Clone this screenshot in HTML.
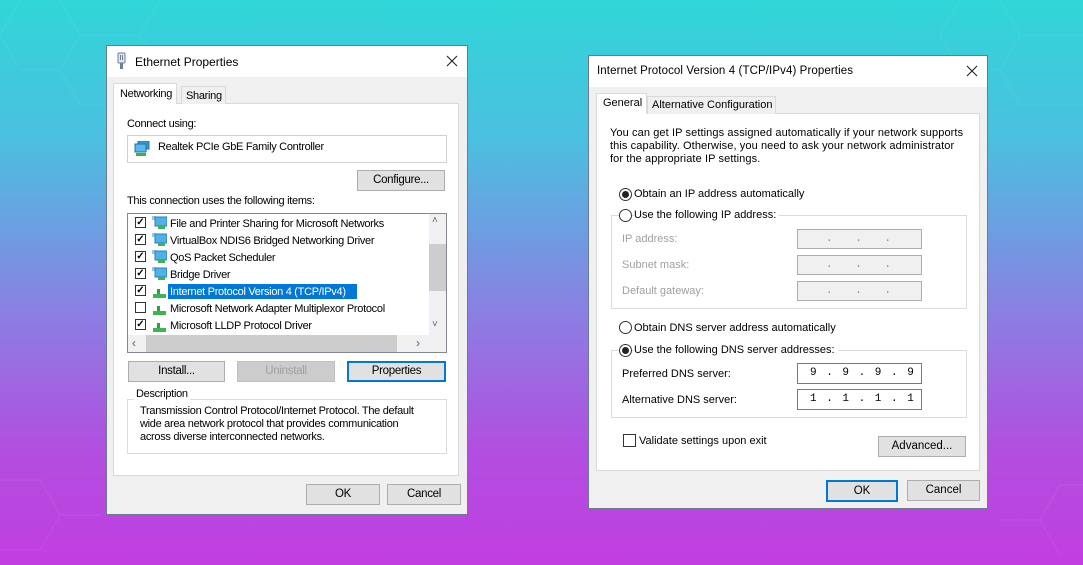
<!DOCTYPE html>
<html><head><meta charset="utf-8"><style>
*{margin:0;padding:0;box-sizing:border-box}
body{width:1083px;height:565px;overflow:hidden;position:relative;font-family:"Liberation Sans",Arial,sans-serif;font-size:11px;letter-spacing:-0.3px;color:#000;
background:linear-gradient(180deg,#30d6d8 0%,#4cbfe0 25%,#8a80e2 55%,#b24ee0 80%,#c23ee0 100%);}
.a{position:absolute}
.dlg{position:absolute;background:#f0f0f0;border:1px solid #6a7a8a}
.tb{position:absolute;left:0;top:0;right:0;background:#fff}
.pan{position:absolute;background:#fff;border:1px solid #d9d9d9}
.btn{position:absolute;background:#e1e1e1;border:1px solid #adadad;text-align:center;font-size:11.5px}
.btn.def{border:2px solid #0078d7}
.t{position:absolute;white-space:nowrap}
.d2 .t,.d2 .btn{letter-spacing:0}
.cb{position:absolute;width:11px;height:11px;border:1px solid #333;background:#fff;font-size:10px;line-height:9px;text-align:center;font-weight:bold;letter-spacing:0}
.ic{position:absolute;width:15px;height:13px}
.rd{position:absolute;width:13px;height:13px;border:1px solid #333;border-radius:50%;background:#fff}
.rd.on::after{content:"";position:absolute;left:2px;top:2px;width:7px;height:7px;border-radius:50%;background:#222}
.grp{position:absolute;border:1px solid #dcdcdc}
.ip{position:absolute;background:#f0f0f0;border:1px solid #adadad;font-family:"Liberation Mono",monospace;font-size:11px;color:#888;letter-spacing:0}
.ip.en{background:#fff;border-color:#7a7a7a;color:#000;word-spacing:3px}
.gray{color:#a0a0a0}
</style></head><body>

<svg class="a" style="left:0;top:0" width="1083" height="565">
<g fill="none" stroke="rgba(255,255,255,0.05)" stroke-width="1.5">
<path d="M0 35 L20 0 M60 0 L80 35 L60 70 L20 70 L0 35 M80 35 L140 35 L160 0 M140 35 L160 70 L140 105 L80 105 L60 70 M160 70 L220 70 M1000 0 L1020 35 L1000 70 L960 70 L940 35 L960 0 M1020 35 L1083 35 M1000 70 L1020 105 L1083 105"/>
<path d="M0 480 L40 480 L60 515 L40 550 L0 550 M60 515 L100 515 M1000 520 L1040 520 L1060 555 M1040 520 L1060 485 L1083 485"/>
</g></svg>

<!-- Dialog 1 -->
<div class="dlg" style="left:106px;top:45px;width:362px;height:470px">
  <div class="tb" style="height:31px"></div>
</div>
<svg class="a" style="left:116px;top:52px" width="12" height="18"><rect x="2" y="1" width="7" height="10" rx="1" fill="#dfe6ee" stroke="#6a7f99"/><rect x="4" y="3" width="1" height="5" fill="#6a7f99"/><rect x="6" y="3" width="1" height="5" fill="#6a7f99"/><rect x="4" y="11" width="3" height="6" fill="#6a7f99"/></svg>
<div class="t" style="left:135px;top:55px;font-size:12px;letter-spacing:0">Ethernet Properties</div>
<svg class="a" style="left:446px;top:55px" width="12" height="12"><path d="M1 1L11 11M11 1L1 11" stroke="#222" stroke-width="1.1"/></svg>

<div class="pan" style="left:113px;top:103px;width:346px;height:373px"></div>
<div class="a" style="left:113px;top:83px;width:64px;height:21px;background:#fff;border:1px solid #d9d9d9;border-bottom:none"></div>
<div class="t" style="left:120px;top:88px">Networking</div>
<div class="a" style="left:181px;top:86px;width:45px;height:18px;background:#f0f0f0;border:1px solid #d9d9d9;border-bottom:none"></div>
<div class="t" style="left:186px;top:90px">Sharing</div>

<div class="t" style="left:127px;top:118px">Connect using:</div>
<div class="a" style="left:127px;top:135px;width:320px;height:28px;border:1px solid #d0d0d0;background:#fff"></div>
<svg class="a" style="left:134px;top:141px" width="16" height="16"><rect x="4" y="0" width="11" height="8" fill="#3a9ad9" stroke="#1d6fa8"/><rect x="1" y="3" width="11" height="8" fill="#5bb8ea" stroke="#1d6fa8"/><rect x="2" y="12" width="10" height="3" fill="#39b24a"/></svg>
<div class="t" style="left:158px;top:141px">Realtek PCIe GbE Family Controller</div>

<div class="btn" style="left:357px;top:170px;width:88px;height:21px;line-height:19px">Configure...</div>
<div class="t" style="left:127px;top:195px">This connection uses the following items:</div>

<div class="a" style="left:127px;top:213px;width:320px;height:140px;border:1px solid #828790;background:#fff"></div>
<div class="a" style="left:429px;top:214px;width:17px;height:121px;background:#f0f0f0"></div>
<div class="a" style="left:429px;top:244px;width:17px;height:47px;background:#cdcdcd"></div>
<div class="t" style="left:432px;top:215px;font-size:10px;color:#606060">˄</div>
<div class="t" style="left:432px;top:319px;font-size:10px;color:#606060">˅</div>
<div class="a" style="left:128px;top:335px;width:318px;height:17px;background:#f0f0f0"></div>
<div class="a" style="left:146px;top:335px;width:251px;height:17px;background:#cdcdcd"></div>
<div class="t" style="left:132px;top:336px;font-size:12px;color:#606060">‹</div>
<div class="t" style="left:416px;top:336px;font-size:12px;color:#606060">›</div>

<div class="a" style="left:168px;top:284px;width:189px;height:15px;background:#0078d7"></div>

<div class="cb" style="left:135px;top:217px">✓</div><svg class="ic" style="left:152px;top:216px"><rect x="0" y="0" width="4" height="4" fill="#8fcbe9"/><rect x="3" y="1" width="12" height="9" fill="#4fb1e6" stroke="#2a80b9"/><rect x="6" y="10" width="7" height="3" fill="#3fb34f"/></svg>
<div class="t" style="left:170px;top:218px">File and Printer Sharing for Microsoft Networks</div>
<div class="cb" style="left:135px;top:234px">✓</div><svg class="ic" style="left:152px;top:233px"><rect x="0" y="0" width="4" height="4" fill="#8fcbe9"/><rect x="3" y="1" width="12" height="9" fill="#4fb1e6" stroke="#2a80b9"/><rect x="6" y="10" width="7" height="3" fill="#3fb34f"/></svg>
<div class="t" style="left:170px;top:235px">VirtualBox NDIS6 Bridged Networking Driver</div>
<div class="cb" style="left:135px;top:251px">✓</div><svg class="ic" style="left:152px;top:250px"><rect x="0" y="0" width="4" height="4" fill="#8fcbe9"/><rect x="3" y="1" width="12" height="9" fill="#4fb1e6" stroke="#2a80b9"/><rect x="6" y="10" width="7" height="3" fill="#3fb34f"/></svg>
<div class="t" style="left:170px;top:252px">QoS Packet Scheduler</div>
<div class="cb" style="left:135px;top:268px">✓</div><svg class="ic" style="left:152px;top:267px"><rect x="0" y="0" width="4" height="4" fill="#8fcbe9"/><rect x="3" y="1" width="12" height="9" fill="#4fb1e6" stroke="#2a80b9"/><rect x="6" y="10" width="7" height="3" fill="#3fb34f"/></svg>
<div class="t" style="left:170px;top:269px">Bridge Driver</div>
<div class="cb" style="left:135px;top:285px">✓</div><svg class="ic" style="left:152px;top:286px"><rect x="5" y="3" width="3" height="6" fill="#2aa24a"/><rect x="1" y="8" width="13" height="4" fill="#3fb34f"/></svg>
<div class="t" style="left:170px;top:286px;color:#fff">Internet Protocol Version 4 (TCP/IPv4)</div>
<div class="cb" style="left:135px;top:302px"></div><svg class="ic" style="left:152px;top:303px"><rect x="5" y="3" width="3" height="6" fill="#2aa24a"/><rect x="1" y="8" width="13" height="4" fill="#3fb34f"/></svg>
<div class="t" style="left:170px;top:303px">Microsoft Network Adapter Multiplexor Protocol</div>
<div class="cb" style="left:135px;top:319px">✓</div><svg class="ic" style="left:152px;top:320px"><rect x="5" y="3" width="3" height="6" fill="#2aa24a"/><rect x="1" y="8" width="13" height="4" fill="#3fb34f"/></svg>
<div class="t" style="left:170px;top:320px">Microsoft LLDP Protocol Driver</div>

<div class="btn" style="left:128px;top:361px;width:97px;height:21px;line-height:19px">Install...</div>
<div class="btn gray" style="left:237px;top:361px;width:98px;height:21px;line-height:19px;background:#cccccc;border-color:#bfbfbf">Uninstall</div>
<div class="btn def" style="left:347px;top:361px;width:99px;height:21px;line-height:17px">Properties</div>

<div class="grp" style="left:127px;top:399px;width:320px;height:55px"></div>
<div class="t" style="left:134px;top:388px;background:#fff;padding:0 2px">Description</div>
<div class="t" style="left:140px;top:405px;line-height:13px">Transmission Control Protocol/Internet Protocol. The default<br>wide area network protocol that provides communication<br>across diverse interconnected networks.</div>

<div class="btn" style="left:306px;top:484px;width:74px;height:21px;line-height:19px">OK</div>
<div class="btn" style="left:387px;top:484px;width:74px;height:21px;line-height:19px">Cancel</div>

<!-- Dialog 2 -->
<div class="d2">
<div class="dlg" style="left:588px;top:55px;width:400px;height:454px">
  <div class="tb" style="height:31px"></div>
</div>
<div class="t" style="left:597px;top:65px;font-size:11.5px;letter-spacing:0.1px">Internet Protocol Version 4 (TCP/IPv4) Properties</div>
<svg class="a" style="left:966px;top:65px" width="12" height="12"><path d="M1 1L11 11M11 1L1 11" stroke="#222" stroke-width="1.1"/></svg>

<div class="pan" style="left:596px;top:113px;width:384px;height:358px"></div>
<div class="a" style="left:596px;top:93px;width:51px;height:21px;background:#fff;border:1px solid #d9d9d9;border-bottom:none"></div>
<div class="t" style="left:603px;top:97px">General</div>
<div class="a" style="left:647px;top:96px;width:129px;height:18px;background:#f0f0f0;border:1px solid #d9d9d9;border-bottom:none"></div>
<div class="t" style="left:652px;top:99px">Alternative Configuration</div>

<div class="t" style="left:610px;top:127px;line-height:13px;letter-spacing:0.1px">You can get IP settings assigned automatically if your network supports<br>this capability. Otherwise, you need to ask your network administrator<br>for the appropriate IP settings.</div>

<div class="rd on" style="left:619px;top:188px"></div>
<div class="t" style="left:634px;top:188px">Obtain an IP address automatically</div>
<div class="grp" style="left:611px;top:215px;width:356px;height:94px"></div>
<div class="rd" style="left:619px;top:209px"></div>
<div class="t" style="left:634px;top:209px;background:#fff;padding-right:3px">Use the following IP address:</div>
<div class="t gray" style="left:622px;top:233px">IP address:</div>
<div class="t gray" style="left:622px;top:259px">Subnet mask:</div>
<div class="t gray" style="left:622px;top:285px">Default gateway:</div>
<div class="ip" style="left:797px;top:229px;width:125px;height:20px;padding:3px 0 0 28px;word-spacing:16px">. . .</div>
<div class="ip" style="left:797px;top:255px;width:125px;height:20px;padding:3px 0 0 28px;word-spacing:16px">. . .</div>
<div class="ip" style="left:797px;top:281px;width:125px;height:20px;padding:3px 0 0 28px;word-spacing:16px">. . .</div>

<div class="rd" style="left:619px;top:321px"></div>
<div class="t" style="left:634px;top:322px">Obtain DNS server address automatically</div>
<div class="grp" style="left:611px;top:350px;width:356px;height:68px"></div>
<div class="rd on" style="left:619px;top:344px"></div>
<div class="t" style="left:634px;top:344px;background:#fff;padding-right:3px">Use the following DNS server addresses:</div>
<div class="t" style="left:622px;top:368px">Preferred DNS server:</div>
<div class="t" style="left:622px;top:394px">Alternative DNS server:</div>
<div class="ip en" style="left:797px;top:363px;width:125px;height:21px;padding:3px 0 0 12px;white-space:pre">9 . 9 . 9 . 9</div>
<div class="ip en" style="left:797px;top:389px;width:125px;height:21px;padding:3px 0 0 12px;white-space:pre">1 . 1 . 1 . 1</div>

<div class="a" style="left:623px;top:434px;width:13px;height:13px;border:1px solid #333;background:#fff"></div>
<div class="t" style="left:639px;top:435px">Validate settings upon exit</div>
<div class="btn" style="left:878px;top:436px;width:88px;height:21px;line-height:19px">Advanced...</div>

<div class="btn def" style="left:826px;top:480px;width:72px;height:22px;line-height:18px">OK</div>
<div class="btn" style="left:907px;top:480px;width:73px;height:21px;line-height:19px">Cancel</div>
</div>

</body></html>
